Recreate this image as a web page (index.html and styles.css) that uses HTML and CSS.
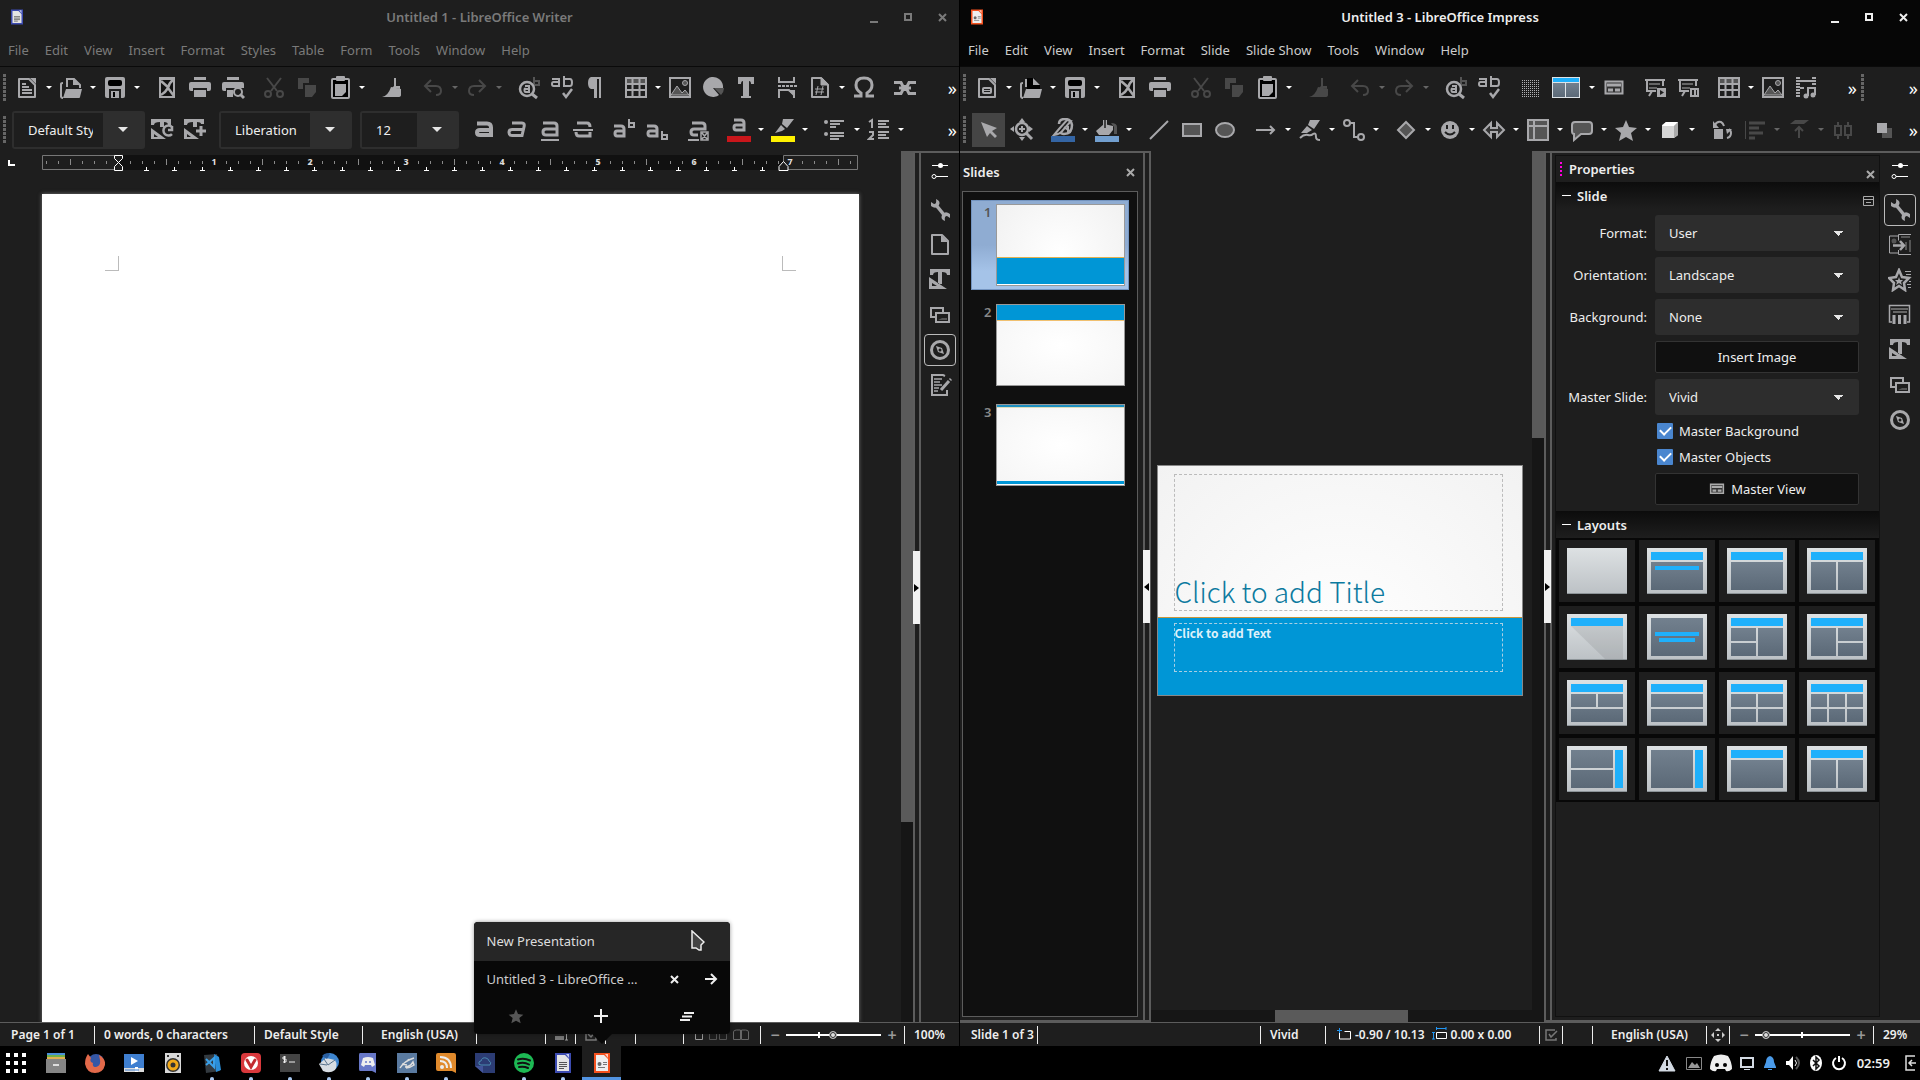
FILE: index.html
```html
<!DOCTYPE html>
<html lang="en">
<head>
<meta charset="utf-8">
<title>Desktop</title>
<link rel="stylesheet" href="styles.css">
</head>
<body>
<svg class="sprite" aria-hidden="true">
  <defs>
    <linearGradient id="g-sheet" x1="0" y1="0" x2="0" y2="1"><stop offset="0" stop-color="#dde1e3"/><stop offset="1" stop-color="#bcc1c5"/></linearGradient>
    <linearGradient id="g-slate" x1="0" y1="0" x2="0" y2="1"><stop offset="0" stop-color="#72808e"/><stop offset="1" stop-color="#5b6977"/></linearGradient>
    <pattern id="p-ticks" width="12" height="15" patternUnits="userSpaceOnUse"><path d="M4.500 6v3" stroke="#8a8a8a"/></pattern>
    <pattern id="p-half" width="96" height="15" patternUnits="userSpaceOnUse" x="-20"><path d="M48.500 4v6" stroke="#8a8a8a"/></pattern>
    <pattern id="p-dots" width="2" height="2" patternUnits="userSpaceOnUse"><path d="M0 0h1v1h-1z" fill="#b0b0b3"/></pattern>
  </defs>
  <symbol id="new" viewBox="0 0 24 24"><path d="M4 3h10l6 6v12H4z" fill="none" stroke="currentColor" stroke-width="2" stroke-linejoin="round"/><path d="M15 2h6v6z" fill="currentColor"/><path d="M7 8h4M7 11h7M7 14h10M7 17h10" stroke="currentColor" stroke-width="2"/></symbol>
  <symbol id="newshow" viewBox="0 0 24 24"><path d="M4 3h10l6 6v12H4z" fill="none" stroke="currentColor" stroke-width="2" stroke-linejoin="round"/><path d="M15 2h6v6z" fill="currentColor"/><rect x="7" y="11" width="10" height="7" rx="2" fill="currentColor"/><path d="M9 13.500h6M9 15.500h6" stroke="#1e1e1e"/></symbol>
  <symbol id="open" viewBox="0 0 24 24"><path d="M8 11V3h7l6 6v3" fill="none" stroke="currentColor" stroke-width="2"/><path d="M14 2l7 7h-7z" fill="currentColor"/><path d="M2 21V8q0-1 2-1M2 20q0 2 2 2" fill="none" stroke="currentColor" stroke-width="2"/><path d="M7 13h16l-2 8q0 1-1 1H4z" fill="currentColor"/></symbol>
  <symbol id="opend" viewBox="0 0 24 24"><path d="M8 2h7l6 7v4H8z" fill="#000"/><path d="M14 2l7 7h-7z" fill="currentColor"/><path d="M2 21V8q0-1 2-1M7 11V3M2 20q0 2 2 2" fill="none" stroke="currentColor" stroke-width="2"/><path d="M7 13h16l-2 8q0 1-1 1H4z" fill="currentColor"/></symbol>
  <symbol id="save" viewBox="0 0 24 24"><rect x="2" y="1" width="20" height="21" rx="2" fill="currentColor"/><rect x="5" y="4" width="14" height="6" rx="2" fill="#000"/><path d="M6 13h12v9H6z" fill="#1e1e1e"/><path d="M8 15h8v7H8z" fill="currentColor"/><path d="M10 16h2v5h-2z" fill="#000"/></symbol>
  <symbol id="pdf" viewBox="0 0 24 24"><path d="M4 1h16v21H4z" fill="currentColor"/><path d="M6 4h12v16H6z" fill="#111"/><path d="M6 5l8 7M18 4q-4 3-5 8-3 5-7 7M13 12l6 8" fill="none" stroke="currentColor" stroke-width="2.500"/></symbol>
  <symbol id="print" viewBox="0 0 24 24"><path d="M6 1h12v3H6zM3 6h18q2 0 2 2v5q0 2-2 2h-2v-3H5v3H3q-2 0-2-2V8q0-2 2-2zM6 14h12v7H6z" fill="currentColor"/></symbol>
  <symbol id="preview" viewBox="0 0 24 24"><path d="M6 1h12v3H6zM3 6h18q2 0 2 2v4H5v3H3q-2 0-2-2V8q0-2 2-2zM6 14h6v7H6z" fill="currentColor"/><circle cx="17" cy="16" r="4" fill="#1e1e1e" stroke="currentColor" stroke-width="2"/><path d="M19 18l4 4" stroke="currentColor" stroke-width="3"/></symbol>
  <symbol id="cut" viewBox="0 0 24 24"><path d="M5 2l10 13M19 2L9 15" stroke="currentColor" stroke-width="2"/><circle cx="6" cy="18" r="3" fill="none" stroke="currentColor" stroke-width="2"/><circle cx="18" cy="18" r="3" fill="none" stroke="currentColor" stroke-width="2"/></symbol>
  <symbol id="copy" viewBox="0 0 24 24"><path d="M3 2h11v5H8v6H3z" fill="currentColor"/><path d="M10 9h11v7l-4 5h-7z" fill="currentColor"/></symbol>
  <symbol id="paste" viewBox="0 0 24 24"><rect x="4" y="3" width="17" height="19" rx="1" fill="#000" stroke="currentColor" stroke-width="2"/><rect x="8" y="0" width="9" height="5" rx="1" fill="currentColor"/><path d="M7 8h11v8l-4 4H7z" fill="currentColor"/></symbol>
  <symbol id="brush" viewBox="0 0 24 24"><path d="M14 2h2v8h4v3l-8-1 2-2z" fill="currentColor"/><path d="M11 11l10 2v6q0 2-3 2H2q6-1 9-10z" fill="currentColor"/></symbol>
  <symbol id="undo" viewBox="0 0 24 24"><path d="M10 4L4 10l6 6M5 10h10q5 0 5 5 0 4-5 4" fill="none" stroke="currentColor" stroke-width="2"/></symbol>
  <symbol id="redo" viewBox="0 0 24 24"><path d="M14 4l6 6-6 6M19 10H9q-5 0-5 5 0 4 5 4" fill="none" stroke="currentColor" stroke-width="2"/></symbol>
  <symbol id="find" viewBox="0 0 24 24"><path d="M17 1v8h5V5h-5" fill="none" stroke="#555" stroke-width="2"/><circle cx="10" cy="13" r="7" fill="#1e1e1e" stroke="currentColor" stroke-width="2.500"/><path d="M8 10h4v6H8.500q-1 0-1-2t1-1H12" fill="none" stroke="currentColor" stroke-width="2"/><path d="M15 18l5 4" stroke="currentColor" stroke-width="3"/></symbol>
  <symbol id="spell" viewBox="0 0 24 24"><path d="M2 3h7v7H3.500Q2 10 2 8t1.500-2H9M14 0v10h6q2 0 2-3.500T20 3h-6" fill="none" stroke="currentColor" stroke-width="2"/><path d="M13 17l3 4 6-8" fill="none" stroke="currentColor" stroke-width="2.500"/></symbol>
  <symbol id="pil" viewBox="0 0 24 24"><path d="M6 1h12v21h-2V3h-2v19h-3V13H8Q5 12 5 7t3-6z" fill="currentColor"/></symbol>
  <symbol id="table" viewBox="0 0 24 24"><path d="M2 2h20v5H2z" fill="#555"/><path d="M2 2h20v19H2zM2 8h20M2 14h20M8.500 2v19M15.500 2v19" fill="none" stroke="currentColor" stroke-width="2"/></symbol>
  <symbol id="image" viewBox="0 0 24 24"><path d="M3 19l6-9 5 7 3-3 4 5z" fill="#555" stroke="currentColor"/><circle cx="17" cy="7" r="2.500" fill="#555" stroke="currentColor"/><path d="M2 2h20v19H2z" fill="none" stroke="currentColor" stroke-width="2"/></symbol>
  <symbol id="chart" viewBox="0 0 24 24"><path d="M13 12h10q0 4-3 7z" fill="#555"/><path d="M12 12h10A10 10 0 1 0 18 19z" fill="currentColor"/></symbol>
  <symbol id="tee" viewBox="0 0 24 24"><path d="M4 1h16v7h-3q0-3-2-3v15h2v2H7v-2h2V5Q7 5 7 8H4z" fill="currentColor"/></symbol>
  <symbol id="pbreak" viewBox="0 0 24 24"><path d="M4 1v5h15V1M4 22v-8h10l5 5v3" fill="none" stroke="currentColor" stroke-width="2"/><path d="M3 10h19" stroke="currentColor" stroke-width="2" stroke-dasharray="3 1"/><path d="M12 14h8v6z" fill="currentColor"/></symbol>
  <symbol id="field" viewBox="0 0 24 24"><path d="M4 2h9l7 7v12H4z" fill="none" stroke="currentColor" stroke-width="2" stroke-linejoin="round"/><path d="M13 2h1l6 6v1h-7zM10 10l-2 9M15 10l-2 9M7 13h9M7 16h9" fill="currentColor" stroke="currentColor"/></symbol>
  <symbol id="omega" viewBox="0 0 24 24"><path d="M2 20h7v-3Q4 14 4 9q0-7 8-7t8 7q0 5-5 8v3h7" fill="none" stroke="currentColor" stroke-width="3"/></symbol>
  <symbol id="link" viewBox="0 0 24 24"><path d="M1 6.500h7l2 4h4l2-4h7M1 17.500h7l2-4h4l2 4h7M6 12h12" fill="none" stroke="currentColor" stroke-width="3"/></symbol>
  <symbol id="tstyle" viewBox="0 0 24 24"><path d="M2 1h20v6h-3q0-3-5-3v12h-4V4Q5 4 5 7H2zM1 9l18 12H1zm3 6v3h5z" fill="currentColor" fill-rule="evenodd"/></symbol>
  <symbol id="tupd" viewBox="0 0 24 24"><path d="M1 1h20v6h-3q0-3-4-3v5h-4V4Q4 4 4 7H1zM1 10l15 11H1zm3 6v3h4z" fill="currentColor" fill-rule="evenodd"/><path d="M22 9a5 5 0 1 0 0 7M22 8v4h-4" fill="none" stroke="currentColor" stroke-width="2.500"/></symbol>
  <symbol id="tnew" viewBox="0 0 24 24"><path d="M1 1h20v5h-3q0-2-4-2v5h-4V4Q4 4 4 7H1zM1 10l15 11H1zm3 6v3h4z" fill="currentColor" fill-rule="evenodd"/><path d="M18 8v10M13 13h10" stroke="currentColor" stroke-width="3"/></symbol>
  <symbol id="bold" viewBox="0 0 24 24"><path d="M5 5.500h10q4 0 4 4v7.500H8q-3 0-3-2.500T8 12h10" fill="none" stroke="currentColor" stroke-width="4"/></symbol>
  <symbol id="ital" viewBox="0 0 24 24"><path d="M7 5h10q3 0 2 4l-2 8.500H7q-3 0-3-3t3-3h11" fill="none" stroke="currentColor" stroke-width="3"/></symbol>
  <symbol id="under" viewBox="0 0 24 24"><path d="M5 5h11q3 0 3 3v9H8q-3 0-3-3t3-3h11" fill="none" stroke="currentColor" stroke-width="3"/><path d="M3 22h18" stroke="currentColor" stroke-width="2"/></symbol>
  <symbol id="strike" viewBox="0 0 24 24"><path d="M6 5h10q3 0 3 4M19 14v4H8q-3 0-3-4" fill="none" stroke="currentColor" stroke-width="3"/><path d="M2 12h20" stroke="currentColor" stroke-width="2"/></symbol>
  <symbol id="sup" viewBox="0 0 24 24"><path d="M2 8h7q3 0 3 3v7H5q-2 0-2-2.500T5 13h7" fill="none" stroke="currentColor" stroke-width="3"/><path d="M17 1v8h5V5h-5" fill="none" stroke="currentColor" stroke-width="2"/></symbol>
  <symbol id="sub" viewBox="0 0 24 24"><path d="M2 8h7q3 0 3 3v7H5q-2 0-2-2.500T5 13h7" fill="none" stroke="currentColor" stroke-width="3"/><path d="M17 13v8h5v-4h-5" fill="none" stroke="currentColor" stroke-width="2"/></symbol>
  <symbol id="clear" viewBox="0 0 24 24"><path d="M6 5h10q3 0 3 3v3H8q-3 0-3 3t3 3h4" fill="none" stroke="currentColor" stroke-width="3"/><path d="M2 22h11" stroke="currentColor" stroke-width="2"/><path d="M15 14h7v8h-7zM16 15l5 6M21 15l-5 6" fill="#1e1e1e" stroke="currentColor" stroke-width="1.500"/></symbol>
  <symbol id="fcol" viewBox="0 0 24 24"><path d="M7 2h7q3 0 3 3v7H9q-2 0-2-2.500T9 7h8" fill="none" stroke="currentColor" stroke-width="3"/><path d="M0 18h24v6H0z" fill="#c9161b"/></symbol>
  <symbol id="hcol" viewBox="0 0 24 24"><path d="M12 1h11l-7 9-5-4zM10 7l4 4-3 2-7 2z" fill="currentColor"/><path d="M0 18h24v6H0z" fill="#fff200"/></symbol>
  <symbol id="bul" viewBox="0 0 24 24"><circle cx="3" cy="4" r="2" fill="currentColor"/><circle cx="3" cy="16" r="2" fill="currentColor"/><path d="M7 3h14M7 6h10M7 9h6M7 15h14M7 18h14M7 21h9" stroke="currentColor" stroke-width="2"/></symbol>
  <symbol id="num" viewBox="0 0 24 24"><path d="M2 4l3-2v8M2 14h4v3l-4 4h5" fill="none" stroke="currentColor" stroke-width="2"/><path d="M11 3h11M11 6h8M11 9h11M11 14h11M11 17h8M11 20h11" stroke="currentColor" stroke-width="2"/></symbol>
  <symbol id="grid" viewBox="0 0 24 24"><path d="M3 4h18v18H3z" fill="url(#p-dots)"/></symbol>
  <symbol id="layout" viewBox="0 0 28 21"><path d="M0 0h28v21H0z" fill="#dde3e7"/><path d="M1 1h26v4H1z" fill="#1fb0fb"/><path d="M1 6h12v14H1zM14 6h13v14H14z" fill="url(#g-slate)"/></symbol>
  <symbol id="master" viewBox="0 0 24 24"><path d="M3.500 5.500h17v12h-17z" fill="#333" stroke="currentColor" stroke-width="2"/><path d="M5 9h14M6 14h5M13 14h5" stroke="currentColor" stroke-width="3"/></symbol>
  <symbol id="play" viewBox="0 0 24 24"><path d="M2 4h20M4 5v10h9M20 5v5M9 15l-3 5" fill="none" stroke="currentColor" stroke-width="2"/><path d="M6 7h11v2H6zM6 11h8v2H6z" fill="#666"/><path d="M14 12h9v9h-9z" fill="currentColor"/><path d="M17 14l4 2.500-4 2.500z" fill="#1e1e1e"/></symbol>
  <symbol id="playc" viewBox="0 0 24 24"><path d="M2 4h20M4 5v10h9M20 5v5M9 15l-3 5" fill="none" stroke="currentColor" stroke-width="2"/><path d="M6 7h11v2H6zM6 11h8v2H6z" fill="#666"/><path d="M14 12h9v9h-9z" fill="currentColor"/><path d="M16 14h2v5h-2zM20 14h1v5h-1z" fill="#1e1e1e"/></symbol>
  <symbol id="video" viewBox="0 0 24 24"><path d="M4 1v20M20 1v9" stroke="currentColor" stroke-width="4" stroke-dasharray="2 1"/><path d="M6 5h12M6 12h4" stroke="currentColor" stroke-width="2"/><path d="M14 20v-8h7v7" fill="none" stroke="currentColor" stroke-width="2"/><circle cx="12" cy="20" r="2.500" fill="currentColor"/><circle cx="19" cy="19" r="2.500" fill="currentColor"/></symbol>
  <symbol id="select" viewBox="0 0 24 24"><path d="M4 4l16 6-5 3 5 5-2 2-5-5-3 4z" fill="currentColor"/></symbol>
  <symbol id="zoom" viewBox="0 0 24 24"><path d="M12 0l3 4H9zM12 23l3-4H9zM0 11l4-3v6zM23 11l-4-3v6z" fill="currentColor"/><circle cx="12" cy="11" r="6" fill="#1e1e1e" stroke="currentColor" stroke-width="2.500"/><path d="M12 8v6M9 11h6" stroke="currentColor" stroke-width="2"/><path d="M16 15l6 6" stroke="currentColor" stroke-width="3"/></symbol>
  <symbol id="lcol" viewBox="0 0 24 24"><path d="M8 6q0-5 6-5t7 6q0 9-8 9-3 0-4-2" fill="none" stroke="currentColor" stroke-width="2.500"/><path d="M3 17q7-1 9-5l8-9-4-1-8 9zM13 9l7 5M17 8v7" fill="none" stroke="currentColor" stroke-width="2"/><path d="M0 18h24v6H0z" fill="#3465a4"/></symbol>
  <symbol id="bcol" viewBox="0 0 24 24"><path d="M16 5q6 0 6 4v7h-3V9z" fill="#555"/><path d="M9 6l9 2v4l-4 5H4l-3-4z" fill="currentColor"/><path d="M10 2v9" stroke="currentColor" stroke-width="4"/><path d="M10 2v8" stroke="#1e1e1e" stroke-width="1.500"/><path d="M0 18h24v6H0z" fill="#729fcf"/></symbol>
  <symbol id="line" viewBox="0 0 24 24"><path d="M3 21L21 3" stroke="currentColor" stroke-width="2"/></symbol>
  <symbol id="rect" viewBox="0 0 24 24"><path d="M3 6h18v12H3z" fill="#555" stroke="currentColor" stroke-width="2"/></symbol>
  <symbol id="ell" viewBox="0 0 24 24"><ellipse cx="12" cy="12" rx="9" ry="7" fill="#555" stroke="currentColor" stroke-width="2"/></symbol>
  <symbol id="larr" viewBox="0 0 24 24"><path d="M2 12h18M16 8l4 4-4 4" fill="none" stroke="currentColor" stroke-width="2"/></symbol>
  <symbol id="curve" viewBox="0 0 24 24"><path d="M12 2h10l-6 9-6-4zM9 8l5 4-5 3-6 0z" fill="currentColor"/><path d="M2 20q4-4 8-3 3 1 5-1 3-2 3 3 0 3 4 3" fill="none" stroke="currentColor" stroke-width="2"/></symbol>
  <symbol id="conn" viewBox="0 0 24 24"><circle cx="5" cy="5" r="3" fill="none" stroke="currentColor" stroke-width="2"/><circle cx="19" cy="19" r="3" fill="none" stroke="currentColor" stroke-width="2"/><path d="M8 5h4v14h4" fill="none" stroke="currentColor" stroke-width="2"/></symbol>
  <symbol id="diam" viewBox="0 0 24 24"><path d="M12 4l8 8-8 8-8-8z" fill="#555" stroke="currentColor" stroke-width="2"/></symbol>
  <symbol id="smile" viewBox="0 0 24 24"><circle cx="12" cy="12" r="9" fill="currentColor"/><path d="M9 7v4M15 7v4M7 14q5 5 10 0" fill="none" stroke="#1e1e1e" stroke-width="2"/></symbol>
  <symbol id="dbl" viewBox="0 0 24 24"><path d="M9 5v5h6V5l7 7-7 7v-5H9v5l-7-7z" fill="#333" stroke="currentColor" stroke-width="2"/></symbol>
  <symbol id="flow" viewBox="0 0 24 24"><path d="M2 2h20v20H2z" fill="#555" stroke="currentColor" stroke-width="2"/><path d="M2 8h20M8 2v20" stroke="currentColor" stroke-width="2"/></symbol>
  <symbol id="call" viewBox="0 0 24 24"><path d="M5 4h14q3 0 3 3v6q0 3-3 3h-8l-7 6v-6Q2 16 2 13V7q0-3 3-3z" fill="#555" stroke="currentColor" stroke-width="2"/></symbol>
  <symbol id="star" viewBox="0 0 24 24"><path d="M12 2l3 7 8 1-6 5 2 8-7-4-7 4 2-8-6-5 8-1z" fill="currentColor"/></symbol>
  <symbol id="cube" viewBox="0 0 24 24"><path d="M4 7l4-3h12v13l-4 3H4z" fill="#d5d5d5"/><path d="M4 8l4-4h12l-4 4z" fill="#fff"/><path d="M16 8l4-4v13l-4 3z" fill="#aaa"/></symbol>
  <symbol id="rot" viewBox="0 0 24 24"><path d="M4 11h9v10H4z" fill="currentColor"/><path d="M5 7q2-4 6-3 2 1 3 4M17 20q4-1 4-5 0-2-2-4" fill="none" stroke="currentColor" stroke-width="2"/><path d="M3 3v7h6zM16 11h6l-5 5z" fill="currentColor"/></symbol>
  <symbol id="align" viewBox="0 0 24 24"><path d="M2.500 3v18" stroke="currentColor"/><path d="M6 5h16M6 10h10M6 15h14M6 20h6" stroke="currentColor" stroke-width="3"/></symbol>
  <symbol id="arr" viewBox="0 0 24 24"><path d="M8 2h14l-5 4H3z" fill="currentColor"/><path d="M12 20V9M8 13l4-4 4 4" fill="none" stroke="currentColor" stroke-width="2"/></symbol>
  <symbol id="dist" viewBox="0 0 24 24"><path d="M4 8h6v9H4zM14 8h6v9h-6zM7 4v4M7 17v4M17 4v4M17 17v4" fill="none" stroke="currentColor" stroke-width="2"/></symbol>
  <symbol id="shadow" viewBox="0 0 24 24"><path d="M10 10h10v10H10z" fill="#555"/><path d="M5 5h10v10H5z" fill="currentColor"/></symbol>
  <symbol id="sliders" viewBox="0 0 24 24"><path d="M4 6.500h16M8 17.500h12" stroke="#fff"/><circle cx="12.500" cy="6.500" r="2.500" fill="#fff"/><circle cx="6" cy="17.500" r="2" fill="none" stroke="#fff"/></symbol>
  <symbol id="wrench" viewBox="0 0 24 24"><path d="M8 7l9 11" stroke="currentColor" stroke-width="3.500"/><path d="M8 1q5 2 3 6-3 5-8 1V4l3 2q3 0 2-5zM17 23q-5-2-3-6 3-5 8-1v4l-3-2q-3 0-2 5z" fill="currentColor"/></symbol>
  <symbol id="page" viewBox="0 0 24 24"><path d="M4 2h10l6 6v13H4z" fill="none" stroke="currentColor" stroke-width="2" stroke-linejoin="round"/><path d="M13 2l7 7h-7z" fill="currentColor"/></symbol>
  <symbol id="gallery" viewBox="0 0 24 24"><path d="M2 5h13v4M7 14H3V5" fill="none" stroke="currentColor" stroke-width="2"/><path d="M8 10h13v9H8z" fill="none" stroke="currentColor" stroke-width="2"/><path d="M10 17l4-2h5v2z" fill="#555"/></symbol>
  <symbol id="navi" viewBox="0 0 24 24"><circle cx="12" cy="12" r="8.500" fill="none" stroke="currentColor" stroke-width="3"/><path d="M8 8l6 2 2 6-6-2z" fill="currentColor"/><circle cx="12" cy="12" r="1.500" fill="#1e1e1e"/></symbol>
  <symbol id="changes" viewBox="0 0 24 24"><path d="M17 3l-2-1H4v20h15v-5" fill="none" stroke="currentColor" stroke-width="2"/><path d="M6 6h8M6 9h6M6 12h8M6 15h5M6 18h4" stroke="currentColor" stroke-width="1.500"/><path d="M13 17l8-9M22 7l1-1" stroke="currentColor" stroke-width="3"/></symbol>
  <symbol id="trans" viewBox="0 0 24 24"><path d="M10 3H1.500v17H11M23 1.500H10.500v6M10.500 17v4.500H23" fill="none" stroke="currentColor"/><path d="M13 4h9M18 9v8M22 7v12" stroke="#555" stroke-width="2"/><path d="M5 12.500h11M12 8l4 4.500-4 4.500" fill="none" stroke="currentColor" stroke-width="2.500"/><circle cx="6" cy="8" r="2.500" fill="#555"/></symbol>
  <symbol id="anim" viewBox="0 0 24 24"><path d="M11 2l3 7 7 1-5 5 1 7-6-4-6 4 1-7-5-5 7-1z" fill="none" stroke="currentColor" stroke-width="2.500"/><path d="M11 9l1 3h3l-2 2 1 3-3-2-3 2 1-3-2-2h3z" fill="currentColor"/><path d="M17 3.500h6M18 6.500h5M21 13.500h2M19 16.500h4M20 19.500h3" stroke="currentColor"/></symbol>
  <symbol id="mslides" viewBox="0 0 24 24"><path d="M4 19H1.500V2.500h20V19H19" fill="none" stroke="currentColor" stroke-width="1.500"/><path d="M3 6h17M5 9h14" stroke="#666" stroke-width="2"/><path d="M6 12v9M11.500 12v9M17 12v9" stroke="currentColor" stroke-width="3"/></symbol>
  <symbol id="wmin" viewBox="0 0 16 16"><path d="M4 12h8v2H4z" fill="currentColor"/></symbol>
  <symbol id="wmax" viewBox="0 0 16 16"><path d="M5 5h6v6H5z" fill="none" stroke="currentColor" stroke-width="2"/></symbol>
  <symbol id="wx" viewBox="0 0 16 16"><path d="M5 5l7 7M12 5l-7 7" stroke="currentColor" stroke-width="2"/></symbol>
  <symbol id="writer" viewBox="0 0 16 20"><path d="M0 0h16v20H0z" fill="#3c4bb0"/><path d="M2 2h8l4 4v12H2z" fill="#e4e4e4"/><path d="M11 1h3v4z" fill="#c5cae9"/><path d="M4 9.500h8M4 11.500h8M4 13.500h8M4 15.500h5" stroke="#555"/></symbol>
  <symbol id="impress" viewBox="0 0 16 20"><path d="M0 0h16v20H0z" fill="#f4511e"/><path d="M2 2h8l4 4v12H2z" fill="#eee"/><path d="M11 1h3v4z" fill="#ffccbc"/><path d="M9 9.500h4M9 11.500h4M4 14.500h7" stroke="#777"/><circle cx="5.500" cy="11" r="2" fill="#666"/></symbol>
  <symbol id="sheet" viewBox="0 0 60 46"><path d="M0 0h60v46H0z" fill="url(#g-sheet)"/><path d="M0 45h60v1H0z" fill="#8d9498"/></symbol>
</svg>

<main class="workspace">
  <section class="window writer" aria-label="Writer">
    <header class="titlebar">
      <svg class="app"><use href="#writer"/></svg><h1>Untitled 1 - LibreOffice Writer</h1>
      <div class="controls"><button aria-label="Minimize"><svg><use href="#wmin"/></svg></button><button aria-label="Maximize"><svg><use href="#wmax"/></svg></button><button aria-label="Close"><svg><use href="#wx"/></svg></button></div>
    </header>
    <nav class="menubar"><button>File</button><button>Edit</button><button>View</button><button>Insert</button><button>Format</button><button>Styles</button><button>Table</button><button>Form</button><button>Tools</button><button>Window</button><button>Help</button></nav>
    <div class="toolbar">
      <i class="grip"></i>
      <button class="tb" aria-label="New"><svg><use href="#new"/></svg></button><button class="dd" aria-label="More"></button>
      <button class="tb" aria-label="Open"><svg><use href="#open"/></svg></button><button class="dd" aria-label="More"></button>
      <button class="tb" aria-label="Save"><svg><use href="#save"/></svg></button><button class="dd" aria-label="More"></button><i class="sep"></i>
      <button class="tb" aria-label="Export as PDF"><svg><use href="#pdf"/></svg></button>
      <button class="tb" aria-label="Print"><svg><use href="#print"/></svg></button>
      <button class="tb" aria-label="Print preview"><svg><use href="#preview"/></svg></button><i class="sep"></i>
      <button class="tb" disabled aria-label="Cut"><svg><use href="#cut"/></svg></button>
      <button class="tb" disabled aria-label="Copy"><svg><use href="#copy"/></svg></button>
      <button class="tb" aria-label="Paste"><svg><use href="#paste"/></svg></button><button class="dd" aria-label="More"></button><i class="sep"></i>
      <button class="tb" aria-label="Clone formatting"><svg><use href="#brush"/></svg></button><i class="sep"></i>
      <button class="tb" disabled aria-label="Undo"><svg><use href="#undo"/></svg></button><button class="dd" disabled aria-label="More"></button>
      <button class="tb" disabled aria-label="Redo"><svg><use href="#redo"/></svg></button><button class="dd" disabled aria-label="More"></button><i class="sep"></i>
      <button class="tb" aria-label="Find"><svg><use href="#find"/></svg></button>
      <button class="tb" aria-label="Spelling"><svg><use href="#spell"/></svg></button>
      <button class="tb" aria-label="Formatting marks"><svg><use href="#pil"/></svg></button><i class="sep"></i>
      <button class="tb" aria-label="Table"><svg><use href="#table"/></svg></button><button class="dd" aria-label="More"></button>
      <button class="tb" aria-label="Image"><svg><use href="#image"/></svg></button>
      <button class="tb" aria-label="Chart"><svg><use href="#chart"/></svg></button>
      <button class="tb" aria-label="Text box"><svg><use href="#tee"/></svg></button><i class="sep"></i>
      <button class="tb" aria-label="Page break"><svg><use href="#pbreak"/></svg></button>
      <button class="tb" aria-label="Field"><svg><use href="#field"/></svg></button><button class="dd" aria-label="More"></button>
      <button class="tb" aria-label="Symbol"><svg><use href="#omega"/></svg></button><i class="sep"></i>
      <button class="tb" aria-label="Hyperlink"><svg><use href="#link"/></svg></button>
      <button class="more">»</button>
    </div>
    <div class="toolbar">
      <i class="grip"></i>
      <span class="combo"><input type="text" value="Default Style" aria-label="Paragraph style"><button aria-label="Open list"></button></span>
      <button class="tb" aria-label="Update style"><svg><use href="#tupd"/></svg></button>
      <button class="tb" aria-label="New style"><svg><use href="#tnew"/></svg></button><i class="sep"></i>
      <span class="combo"><input type="text" value="Liberation Serif" aria-label="Font"><button aria-label="Open list"></button></span><i class="sep"></i>
      <span class="combo size"><input type="text" value="12" aria-label="Font size"><button aria-label="Open list"></button></span><i class="sep"></i>
      <button class="tb" aria-label="Bold"><svg><use href="#bold"/></svg></button>
      <button class="tb" aria-label="Italic"><svg><use href="#ital"/></svg></button>
      <button class="tb" aria-label="Underline"><svg><use href="#under"/></svg></button>
      <button class="tb" aria-label="Strikethrough"><svg><use href="#strike"/></svg></button><i class="sep"></i>
      <button class="tb" aria-label="Superscript"><svg><use href="#sup"/></svg></button>
      <button class="tb" aria-label="Subscript"><svg><use href="#sub"/></svg></button><i class="sep"></i>
      <button class="tb" aria-label="Clear formatting"><svg><use href="#clear"/></svg></button><i class="sep"></i>
      <button class="tb" aria-label="Font colour"><svg><use href="#fcol"/></svg></button><button class="dd" aria-label="More"></button>
      <button class="tb" aria-label="Highlighting"><svg><use href="#hcol"/></svg></button><button class="dd" aria-label="More"></button><i class="sep"></i>
      <button class="tb" aria-label="Bullets"><svg><use href="#bul"/></svg></button><button class="dd" aria-label="More"></button>
      <button class="tb" aria-label="Numbering"><svg><use href="#num"/></svg></button><button class="dd" aria-label="More"></button>
      <button class="more">»</button>
    </div>
    <div class="body">
      <div class="document">
        <div class="rulerbar">
          <svg class="tab" viewBox="0 0 7 6"><path d="M1 0v5h6" fill="none" stroke="#fff" stroke-width="2"/></svg>
          <svg class="ruler" viewBox="0 0 817 18">
            <path d="M76 0h666v15H76z" fill="#111"/>
            <path d="M.500.500h76v14H.500zM741.500.500h74v14h-74z" fill="none" stroke="#777"/>
            <path d="M4 0h810v15H4z" fill="url(#p-ticks)"/><path d="M4 0h810v15H4z" fill="url(#p-half)"/>
            <path d="M104.500 12v3" stroke="#fff"/>
            <path d="M104 13.500h630" stroke="#fff" stroke-width="3" stroke-dasharray="1 27"/>
            <path d="M102 15.500h637" stroke="#fff" stroke-dasharray="5 23"/>
            <path d="M72.500.500h8v3l-8 8v4h8v-4l-8-8zM737 15.500v-4l4.500-5 4.500 5v4z" fill="#1e1e1e" stroke="#fff"/>
            <g class="nums"><text x="172" y="10">1</text><text x="268" y="10">2</text><text x="364" y="10">3</text><text x="460" y="10">4</text><text x="556" y="10">5</text><text x="652" y="10">6</text><text x="748" y="10">7</text></g>
          </svg>
        </div>
        <article class="paper"><i class="crop left"></i><i class="crop right"></i></article>
      </div>
      <div class="vscroll"><i class="w"></i></div>
      <div class="splitter"><button aria-label="Hide sidebar"><svg viewBox="0 0 5 8"><path d="M0 0l5 4-5 4z"/></svg></button></div>
      <nav class="tabs">
        <button aria-label="Settings"><svg><use href="#sliders"/></svg></button>
        <button aria-label="Properties"><svg><use href="#wrench"/></svg></button>
        <button aria-label="Page"><svg><use href="#page"/></svg></button>
        <button aria-label="Styles"><svg><use href="#tstyle"/></svg></button>
        <button aria-label="Gallery"><svg><use href="#gallery"/></svg></button>
        <button class="on" aria-label="Navigator"><svg><use href="#navi"/></svg></button>
        <button aria-label="Changes"><svg><use href="#changes"/></svg></button>
      </nav>
    </div>
    <footer class="status">
      <span class="c95">Page 1 of 1</span><span class="grow">0 words, 0 characters</span><span class="c108">Default Style</span><span class="c114 mid">English (USA)</span><span class="c69"></span>
      <span class="c30 mid"><svg class="st" viewBox="0 0 16 16"><path d="M2 9h9v4H2z" fill="#777"/><path d="M12 3h3M13.500 3v10M12 13h3" stroke="#999"/></svg></span>
      <span class="c30 mid"><svg class="st" viewBox="0 0 16 16"><path d="M11 3H3v10h10V9M5 7l3 3 6-7" fill="none" stroke="#777" stroke-width="1.500"/></svg></span>
      <span class="c30"></span><span class="c48"></span>
      <span class="c77 mid views"><svg viewBox="0 0 8 12"><path d="M.500.500h7v10h-7z" fill="none" stroke="#999"/></svg><svg viewBox="0 0 18 12"><path d="M.500.500h7v10h-7zM10.500.500h7v10h-7z" fill="none" stroke="#555"/></svg><svg viewBox="0 0 16 12"><path d="M.500 10.500V3q0-2 3-2h4v9.500zM8.500 1h4q3 0 3 2v7.500h-7z" fill="none" stroke="#666"/></svg></span>
      <span class="zoom"><button>−</button><input type="range" class="zw" min="0" max="100" value="49" aria-label="Zoom"><button>+</button></span><span class="c55 last">100%</span>
    </footer>
  </section>

  <section class="window impress" aria-label="Impress">
    <header class="titlebar">
      <svg class="app"><use href="#impress"/></svg><h1>Untitled 3 - LibreOffice Impress</h1>
      <div class="controls"><button aria-label="Minimize"><svg><use href="#wmin"/></svg></button><button aria-label="Maximize"><svg><use href="#wmax"/></svg></button><button aria-label="Close"><svg><use href="#wx"/></svg></button></div>
    </header>
    <nav class="menubar"><button>File</button><button>Edit</button><button>View</button><button>Insert</button><button>Format</button><button>Slide</button><button>Slide Show</button><button>Tools</button><button>Window</button><button>Help</button></nav>
    <div class="toolbar">
      <i class="grip"></i>
      <button class="tb" aria-label="New"><svg><use href="#newshow"/></svg></button><button class="dd" aria-label="More"></button>
      <button class="tb" aria-label="Open"><svg><use href="#opend"/></svg></button><button class="dd" aria-label="More"></button>
      <button class="tb" aria-label="Save"><svg><use href="#save"/></svg></button><button class="dd" aria-label="More"></button><i class="sep"></i>
      <button class="tb" aria-label="Export as PDF"><svg><use href="#pdf"/></svg></button>
      <button class="tb" aria-label="Print"><svg><use href="#print"/></svg></button><i class="sep"></i>
      <button class="tb" disabled aria-label="Cut"><svg><use href="#cut"/></svg></button>
      <button class="tb" disabled aria-label="Copy"><svg><use href="#copy"/></svg></button>
      <button class="tb" aria-label="Paste"><svg><use href="#paste"/></svg></button><button class="dd" aria-label="More"></button><i class="sep"></i>
      <button class="tb" disabled aria-label="Clone formatting"><svg><use href="#brush"/></svg></button><i class="sep"></i>
      <button class="tb" disabled aria-label="Undo"><svg><use href="#undo"/></svg></button><button class="dd" disabled aria-label="More"></button>
      <button class="tb" disabled aria-label="Redo"><svg><use href="#redo"/></svg></button><button class="dd" disabled aria-label="More"></button><i class="sep"></i>
      <button class="tb" aria-label="Find"><svg><use href="#find"/></svg></button>
      <button class="tb" aria-label="Spelling"><svg><use href="#spell"/></svg></button><i class="sep"></i>
      <button class="tb" aria-label="Grid"><svg><use href="#grid"/></svg></button>
      <button class="tb wide" aria-label="Layout"><svg><use href="#layout"/></svg></button><button class="dd" aria-label="More"></button>
      <button class="tb" aria-label="Master slide"><svg><use href="#master"/></svg></button><i class="sep"></i>
      <button class="tb" aria-label="Start from first"><svg><use href="#play"/></svg></button>
      <button class="tb" aria-label="Start from current"><svg><use href="#playc"/></svg></button><i class="sep"></i>
      <button class="tb" aria-label="Table"><svg><use href="#table"/></svg></button><button class="dd" aria-label="More"></button>
      <button class="tb" aria-label="Image"><svg><use href="#image"/></svg></button>
      <button class="tb" aria-label="Audio or video"><svg><use href="#video"/></svg></button>
      <button class="more">»</button><i class="grip second"></i><button class="more end">»</button>
    </div>
    <div class="toolbar">
      <i class="grip"></i>
      <button class="tb on" aria-label="Select"><svg><use href="#select"/></svg></button>
      <button class="tb" aria-label="Zoom and pan"><svg><use href="#zoom"/></svg></button><i class="sep"></i>
      <button class="tb" aria-label="Line colour"><svg><use href="#lcol"/></svg></button><button class="dd" aria-label="More"></button>
      <button class="tb" aria-label="Fill colour"><svg><use href="#bcol"/></svg></button><button class="dd" aria-label="More"></button><i class="sep"></i>
      <button class="tb" aria-label="Line"><svg><use href="#line"/></svg></button>
      <button class="tb" aria-label="Rectangle"><svg><use href="#rect"/></svg></button>
      <button class="tb" aria-label="Ellipse"><svg><use href="#ell"/></svg></button><i class="sep"></i>
      <button class="tb" aria-label="Lines and arrows"><svg><use href="#larr"/></svg></button><button class="dd" aria-label="More"></button>
      <button class="tb" aria-label="Curves"><svg><use href="#curve"/></svg></button><button class="dd" aria-label="More"></button>
      <button class="tb" aria-label="Connectors"><svg><use href="#conn"/></svg></button><button class="dd" aria-label="More"></button><i class="sep"></i>
      <button class="tb" aria-label="Basic shapes"><svg><use href="#diam"/></svg></button><button class="dd" aria-label="More"></button>
      <button class="tb" aria-label="Symbols"><svg><use href="#smile"/></svg></button><button class="dd" aria-label="More"></button>
      <button class="tb" aria-label="Block arrows"><svg><use href="#dbl"/></svg></button><button class="dd" aria-label="More"></button>
      <button class="tb" aria-label="Flowchart"><svg><use href="#flow"/></svg></button><button class="dd" aria-label="More"></button>
      <button class="tb" aria-label="Callouts"><svg><use href="#call"/></svg></button><button class="dd" aria-label="More"></button>
      <button class="tb" aria-label="Stars"><svg><use href="#star"/></svg></button><button class="dd" aria-label="More"></button>
      <button class="tb" aria-label="3D objects"><svg><use href="#cube"/></svg></button><button class="dd" aria-label="More"></button><i class="sep"></i>
      <button class="tb" aria-label="Rotate"><svg><use href="#rot"/></svg></button>
      <button class="tb" disabled aria-label="Align"><svg><use href="#align"/></svg></button><button class="dd" disabled aria-label="More"></button>
      <button class="tb" disabled aria-label="Arrange"><svg><use href="#arr"/></svg></button><button class="dd" disabled aria-label="More"></button>
      <button class="tb" disabled aria-label="Distribute"><svg><use href="#dist"/></svg></button><i class="sep"></i>
      <button class="tb" aria-label="Shadow"><svg><use href="#shadow"/></svg></button>
      <button class="more">»</button>
    </div>
    <div class="body">
      <aside class="slides">
        <header><h2>Slides</h2><button aria-label="Close"><svg><use href="#wx"/></svg></button></header>
        <ol>
          <li class="on"><span>1</span><i class="thumb first"></i></li>
          <li><span>2</span><i class="thumb second"></i></li>
          <li><span>3</span><i class="thumb third"></i></li>
        </ol>
      </aside>
      <div class="splitter lined"><button aria-label="Hide slides"><svg viewBox="0 0 5 8"><path d="M5 0L0 4l5 4z"/></svg></button></div>
      <div class="stage">
        <div class="canvas"><div class="slide"><div class="title">Click to add Title</div><div class="lower"><div class="text">Click to add Text</div></div></div></div>
        <div class="hscroll"><i></i></div>
      </div>
      <div class="vscroll"><i class="i"></i></div>
      <div class="splitter lined"><button aria-label="Hide sidebar"><svg viewBox="0 0 5 8"><path d="M0 0l5 4-5 4z"/></svg></button></div>
      <div class="sidebar">
        <div class="deck">
          <header class="deckhead"><i class="pink"></i><h2>Properties</h2><button aria-label="Close"><svg><use href="#wx"/></svg></button></header>
          <h3>Slide<button class="opts" aria-label="More options"><svg viewBox="0 0 12 11"><path d="M.500.500h10v9h-10zM0 3.500h11M3 6.500h5" fill="none" stroke="#aaa"/></svg></button></h3>
          <div class="form">
            <label for="format">Format:</label><select id="format"><option>User</option></select>
            <label for="orient">Orientation:</label><select id="orient"><option>Landscape</option></select>
            <label for="bg">Background:</label><select id="bg"><option>None</option></select>
            <button class="btn">Insert Image</button>
            <label for="ms">Master Slide:</label><select id="ms"><option>Vivid</option></select>
            <div class="checks"><label><input type="checkbox" checked>Master Background</label><label><input type="checkbox" checked>Master Objects</label></div>
            <button class="btn"><svg><use href="#master"/></svg>Master View</button>
          </div>
          <h3>Layouts</h3>
          <div class="layouts">
            <button aria-label="Blank"><svg viewBox="0 0 60 46"><use href="#sheet"/></svg></button>
            <button aria-label="Title slide"><svg viewBox="0 0 60 46"><use href="#sheet"/><path class="b" d="M4 4h52v8H4z"/><path class="s" d="M4 14h52v28H4z"/><path class="b" d="M8 18h44v4H8z"/></svg></button>
            <button aria-label="Title, content"><svg viewBox="0 0 60 46"><use href="#sheet"/><path class="b" d="M4 4h52v8H4z"/><path class="s" d="M4 14h52v28H4z"/></svg></button>
            <button aria-label="Title and two content"><svg viewBox="0 0 60 46"><use href="#sheet"/><path class="b" d="M4 4h52v8H4z"/><path class="s" d="M4 14h25v28H4zM31 14h25v28H31z"/></svg></button>
            <button aria-label="Title only"><svg viewBox="0 0 60 46"><use href="#sheet"/><path d="M4 12h52v33H38z" fill="#000" opacity=".08"/><path class="b" d="M4 4h52v8H4z"/></svg></button>
            <button aria-label="Centered text"><svg viewBox="0 0 60 46"><use href="#sheet"/><path class="s" d="M4 4h52v38H4z"/><path class="b" d="M8 18h44v4H8zM12 24h36v4H12z"/></svg></button>
            <button aria-label="Two content and content"><svg viewBox="0 0 60 46"><use href="#sheet"/><path class="b" d="M4 4h52v8H4z"/><path class="s" d="M4 14h25v13H4zM4 29h25v13H4zM31 14h25v28H31z"/></svg></button>
            <button aria-label="Content and two content"><svg viewBox="0 0 60 46"><use href="#sheet"/><path class="b" d="M4 4h52v8H4z"/><path class="s" d="M4 14h25v28H4zM31 14h25v13H31zM31 29h25v13H31z"/></svg></button>
            <button aria-label="Two content over content"><svg viewBox="0 0 60 46"><use href="#sheet"/><path class="b" d="M4 4h52v8H4z"/><path class="s" d="M4 14h25v13H4zM31 14h25v13H31zM4 29h52v13H4z"/></svg></button>
            <button aria-label="Content over content"><svg viewBox="0 0 60 46"><use href="#sheet"/><path class="b" d="M4 4h52v8H4z"/><path class="s" d="M4 14h52v13H4zM4 29h52v13H4z"/></svg></button>
            <button aria-label="Four content"><svg viewBox="0 0 60 46"><use href="#sheet"/><path class="b" d="M4 4h52v8H4z"/><path class="s" d="M4 14h25v13H4zM31 14h25v13H31zM4 29h25v13H4zM31 29h25v13H31z"/></svg></button>
            <button aria-label="Six content"><svg viewBox="0 0 60 46"><use href="#sheet"/><path class="b" d="M4 4h52v8H4z"/><path class="s" d="M4 14h16v13H4zM22 14h16v13H22zM40 14h16v13H40zM4 29h16v13H4zM22 29h16v13H22zM40 29h16v13H40z"/></svg></button>
            <button aria-label="Vertical title, text, chart"><svg viewBox="0 0 60 46"><use href="#sheet"/><path class="b" d="M48 4h8v38h-8z"/><path class="s" d="M4 4h42v18H4zM4 24h42v18H4z"/></svg></button>
            <button aria-label="Vertical title, vertical text"><svg viewBox="0 0 60 46"><use href="#sheet"/><path class="b" d="M48 4h8v38h-8z"/><path class="s" d="M4 4h42v38H4z"/></svg></button>
            <button aria-label="Title, vertical text"><svg viewBox="0 0 60 46"><use href="#sheet"/><path class="b" d="M4 4h52v8H4z"/><path class="s" d="M4 14h52v28H4z"/></svg></button>
            <button aria-label="Title, two vertical text"><svg viewBox="0 0 60 46"><use href="#sheet"/><path class="b" d="M4 4h52v8H4z"/><path class="s" d="M4 14h25v28H4zM31 14h25v28H31z"/></svg></button>
          </div>
        </div>
        <nav class="tabs">
          <button aria-label="Settings"><svg><use href="#sliders"/></svg></button>
          <button class="on" aria-label="Properties"><svg><use href="#wrench"/></svg></button>
          <button aria-label="Slide transition"><svg><use href="#trans"/></svg></button>
          <button aria-label="Animation"><svg><use href="#anim"/></svg></button>
          <button aria-label="Master slides"><svg><use href="#mslides"/></svg></button>
          <button aria-label="Styles"><svg><use href="#tstyle"/></svg></button>
          <button aria-label="Gallery"><svg><use href="#gallery"/></svg></button>
          <button aria-label="Navigator"><svg><use href="#navi"/></svg></button>
        </nav>
      </div>
    </div>
    <footer class="status">
      <span class="c78">Slide 1 of 3</span><span class="grow"></span><span class="c65">Vivid</span>
      <span class="c214 pos"><svg class="st" viewBox="0 0 16 16"><path d="M4.500 5v7h11V4.500h-6" fill="none" stroke="#fff"/><path d="M4.500 1v5M2 3.500h5" stroke="#2196f3"/></svg><b>-0.90 / 10.13</b><svg class="st" viewBox="0 0 16 16"><path d="M5.500 5.500h10v6h-10z" fill="none" stroke="#fff"/><path d="M5 1.500h10M5.500 0v3M15 0v3M2.500 5v7M1 5.500h3M1 12h3" stroke="#2196f3"/></svg><b>0.00 x 0.00</b></span>
      <span class="c23 mid"><svg class="st" viewBox="0 0 16 16"><path d="M12 3H3v10h10v-2M6 7l2 3 6-6" fill="none" stroke="#777" stroke-width="1.500"/></svg></span><span class="c30"></span><span class="c114 mid">English (USA)</span>
      <span class="c23 mid"><svg class="st" viewBox="0 0 16 16"><path d="M8 1l3 3H5zM8 15l3-3H5zM1 8l3-3v6zM15 8l-3-3v6zM7 7h2v2H7z" fill="#ccc"/></svg></span>
      <span class="zoom"><button>−</button><input type="range" class="zi" min="0" max="100" value="8" aria-label="Zoom"><button>+</button></span><span class="c47 last">29%</span>
    </footer>
  </section>
</main>

<footer class="panel">
  <button class="menu" aria-label="Applications"><svg viewBox="0 0 20 20"><path d="M0 0h4v4H0zM8 0h4v4H8zM16 0h4v4h-4zM0 8h4v4H0zM8 8h4v4H8zM16 8h4v4h-4zM0 16h4v4H0zM8 16h4v4H8zM16 16h4v4h-4z" fill="#fff"/></svg></button>
  <div class="tasks">
    <button aria-label="Files"><svg viewBox="0 0 20 20"><path d="M1 0h18v7H1z" fill="#4a90d9"/><path d="M1 2h18v5H1z" fill="#6fb04a"/><path d="M1 4h18v3H1z" fill="#e0b050"/><path d="M0 6h20v14H0z" fill="#858585"/><path d="M7 11h6v2H7z" fill="#ddd"/></svg></button>
    <button aria-label="Firefox"><svg viewBox="0 0 20 20"><circle cx="11" cy="9" r="8" fill="#3457a6"/><path d="M3 1l3 4q-2 4 2 5-1 4 3 4 5-1 4-7l-1-5q7 4 6 10-2 8-10 8T0 11Q0 5 3 1z" fill="#e2694a"/></svg></button>
    <button aria-label="Videos"><svg viewBox="0 0 20 20"><path d="M0 1h20v14H0z" fill="#3f7fd0"/><path d="M0 15h20v4H0z" fill="#ddd"/><path d="M7 4l7 4-7 4zM11 14h3v5h-3z" fill="#fff"/><path d="M1 17h14" stroke="#3f7fd0"/></svg></button>
    <button aria-label="Music"><svg viewBox="0 0 20 20"><path d="M2 0h16v20H2z" fill="#d8d8d8"/><circle cx="10" cy="12" r="7" fill="#333"/><circle cx="10" cy="12" r="4" fill="#333" stroke="#f0a818" stroke-width="3"/><path d="M4 2h2v2H4zM14 2h2v2h-2z" fill="#333"/></svg></button>
    <button class="run" aria-label="Code"><svg viewBox="0 0 20 20"><path d="M2 2l13-1 3 17-14 2z" fill="#333a40"/><path d="M12 1l5 3 2 13-5 2z" fill="#2a8ed8"/><path d="M4 6l8 8V5l-8 7" fill="none" stroke="#3aa0e8" stroke-width="2"/></svg></button>
    <button class="run" aria-label="Vivaldi"><svg viewBox="0 0 20 20"><rect width="20" height="20" rx="4" fill="#d8383c"/><circle cx="10" cy="10" r="7" fill="#fff"/><path d="M6 7l4 7 4-7" fill="none" stroke="#c22c30" stroke-width="3" stroke-linecap="round"/></svg></button>
    <button class="run" aria-label="Terminal"><svg viewBox="0 0 20 20"><path d="M0 1h20v18H0z" fill="#444"/><path d="M6 4H3v2h3v3H3M4.500 3v7M9 9h6" fill="none" stroke="#eee"/></svg></button>
    <button class="run" aria-label="Mail"><svg viewBox="0 0 20 20"><circle cx="11" cy="9" r="9" fill="#3f86d0"/><path d="M0 11l7-6 9 2q3 5 0 10-5 4-12 1z" fill="#d8dde2"/><path d="M5 6l4 6 7-5M1 11l7 1" fill="none" stroke="#55708a"/><path d="M3 3q3-4 8-2L8 6z" fill="#2a5fa0"/></svg></button>
    <button class="run" aria-label="Discord"><svg viewBox="0 0 20 20"><path d="M2 0h16v20l-4-2H2Q1 18 1 16V2q0-2 1-2z" fill="#6878c8"/><path d="M5 5q5-2 10 0l2 7-3 2-1-2H7l-1 2-3-2z" fill="#eee"/><circle cx="8" cy="9" r="1" fill="#6878c8"/><circle cx="12" cy="9" r="1" fill="#6878c8"/></svg></button>
    <button class="run" aria-label="Airplane"><svg viewBox="0 0 20 20"><path d="M0 0h20v20H0z" fill="#5a7aa0"/><path d="M3 15q4-7 14-10M5 11l5 1M11 6l1 2M8 14q5 0 8-5l1 3q-4 3-8 3" fill="none" stroke="#ddd" stroke-width="1.500"/></svg></button>
    <button class="run" aria-label="Feeds"><svg viewBox="0 0 20 20"><path d="M0 2q0-2 2-2h16q2 0 2 2v18l-4-2H2q-2 0-2-2z" fill="#e08a2c"/><circle cx="6" cy="14" r="2" fill="#eee"/><path d="M4 8q7 0 7 7M4 4q11 0 11 11" fill="none" stroke="#eee" stroke-width="2"/></svg></button>
    <button aria-label="Cloud"><svg viewBox="0 0 20 20"><path d="M0 0h20v20H8L0 13z" fill="#2c3c74"/><path d="M0 13l8 7v-7z" fill="#42549a"/><path d="M6 12q-3 0-2-3 1-1 2-1 1-4 5-3 3 1 3 3 3 1 1 4z" fill="none" stroke="#4a8ab0"/></svg></button>
    <button class="run" aria-label="Spotify"><svg viewBox="0 0 20 20"><circle cx="10" cy="10" r="10" fill="#1db954"/><path d="M4 6.500q6-2 12 1M4 10.500q6-2 11 1M5 14q5-1 9 1" fill="none" stroke="#111" stroke-width="2" stroke-linecap="round"/></svg></button>
    <button class="run" aria-label="Writer"><svg viewBox="0 0 16 20"><use href="#writer"/></svg></button>
    <div class="slot">
      <button class="active" aria-label="Impress"><svg viewBox="0 0 16 20"><use href="#impress"/></svg></button>
      <div class="popup">
        <button class="head">New Presentation</button>
        <div class="row"><button class="name">Untitled 3 - LibreOffice …</button><button class="ic" aria-label="Close"><svg><use href="#wx"/></svg></button><button class="ic" aria-label="Go to"><svg viewBox="0 0 16 16"><path d="M2 8h11M8 3l5 5-5 5" fill="none" stroke="currentColor" stroke-width="2"/></svg></button></div>
        <div class="acts"><button class="dim" aria-label="Pin"><svg viewBox="0 0 24 24"><use href="#star"/></svg></button><button aria-label="New window"><svg viewBox="0 0 16 16"><path d="M8 1v14M1 8h14" stroke="currentColor" stroke-width="2"/></svg></button><button aria-label="Window controls"><svg viewBox="0 0 16 16"><path d="M5 5h10M3 8.500h10M1 12h10" stroke="currentColor" stroke-width="2"/></svg></button></div>
        <svg class="cursor" viewBox="0 0 14 22"><path d="M1 1v17h4l3 2h2v-5l3-3z" fill="#444" stroke="#eee" stroke-width="1.500"/></svg>
      </div>
    </div>
  </div>
  <div class="tray">
    <svg viewBox="0 0 20 20"><path d="M10 3l8 15H2z" fill="#d3dae3" stroke="#d3dae3" stroke-linejoin="round"/><path d="M9 7h2v6H9zM9 15h2v2H9z" fill="#111"/></svg>
    <svg viewBox="0 0 20 20"><path d="M2.500 4.500h15v12h-15z" fill="none" stroke="#888"/><path d="M4 15l4-6 3 3 2-2 3 5z" fill="#999"/></svg>
    <svg viewBox="0 0 22 18"><path d="M4 2q7-3 14 0 4 6 4 13-3 3-6 2l-1-2H7l-1 2Q3 18 0 15 0 8 4 2z" fill="#eee"/><circle cx="7" cy="11" r="2" fill="#000"/><circle cx="15" cy="11" r="2" fill="#000"/></svg>
    <svg viewBox="0 0 20 20"><path d="M4 5h12v9H4z" fill="none" stroke="#d3dae3" stroke-width="2"/><path d="M7 16h6v1H7z" fill="#d3dae3"/></svg>
    <svg viewBox="0 0 20 20"><path d="M10 3q4 1 4 6l2 5v1H4v-1l2-5q0-5 4-6zM8 16h4v1H8z" fill="#4a9ae8"/></svg>
    <svg viewBox="0 0 20 20"><path d="M3 8h3l4-5v14l-4-5H3z" fill="#fff"/><path d="M12 7q3 3 0 6" fill="none" stroke="#fff"/><path d="M13 4q6 6 0 12" fill="none" stroke="#555" stroke-width="2"/></svg>
    <svg viewBox="0 0 20 20"><ellipse cx="10" cy="10" rx="6" ry="8" fill="#fff"/><path d="M7 7l6 6-3 3V4l3 3-6 6" fill="none" stroke="#111" stroke-width="1.500"/></svg>
    <svg viewBox="0 0 20 20"><path d="M7 5a6 6 0 1 0 6 0M10 3v6" fill="none" stroke="#fff" stroke-width="2"/></svg>
    <time>02:59</time>
    <svg viewBox="0 0 20 20"><path d="M15 3H6v14h9M16 10h-7M12 7l-3 3 3 3" fill="none" stroke="#ddd" stroke-width="1.500"/></svg>
  </div>
</footer>
</body>
</html>
```
FILE: styles.css
```css
* { box-sizing: border-box; }
html, body { height: 100%; margin: 0; }
body {
  display: flex;
  flex-direction: column;
  min-height: 100vh;
  overflow: hidden;
  background: #000;
  color: #eee;
  font: 13px/20px "Noto Sans", sans-serif;
}
button, input, select { font: inherit; color: inherit; margin: 0; }
button { padding: 0; border: 0; background: none; }
h1, h2, h3, ol { margin: 0; padding: 0; font-size: 13px; font-weight: 600; list-style: none; }
svg { display: block; flex: none; }
i { display: block; flex: none; }
.sprite { position: absolute; width: 0; height: 0; }

.workspace { display: flex; flex: 1; min-height: 0; }
.window { display: flex; flex: none; flex-direction: column; width: 50%; min-width: 0; background: #1e1e1e; }
.writer { border-right: 1px solid #000; }

.titlebar { display: grid; grid-template-columns: 1fr auto 1fr; align-items: center; height: 34px; flex: none; }
.app { width: 12px; height: 16px; margin-left: 11px; }
.controls { display: flex; justify-content: flex-end; }
.controls button { display: grid; place-items: center; width: 34px; height: 34px; }
.controls svg { width: 16px; height: 16px; }
.writer .titlebar, .writer .menubar { color: #7a7a7a; }
.impress .titlebar, .impress .menubar { background: #060606; }
.menubar { display: flex; flex: none; height: 33px; border-bottom: 1px solid #0a0a0a; }
.menubar button { padding: 0 8px; }
.impress .menubar { color: #ccc; }

.toolbar { display: flex; flex: none; align-items: center; height: 42px; padding: 0 0 1px 3px; color: #a8a8ab; }
.grip { width: 3px; height: 27px; margin-right: 4px; background: repeating-linear-gradient(#666 0 3px, transparent 3px 4px); }
.toolbar + .toolbar .grip { margin-right: 6px; }
.grip.second { margin: 0 0 0 2px; }
.tb { display: grid; place-items: center; flex: none; width: 33px; height: 34px; }
.tb svg { width: 24px; height: 24px; }
.tb.wide { width: 40px; }
.tb.wide svg { width: 28px; height: 21px; }
.tb.on { background: #454545; }
.dd { display: grid; place-items: center; flex: none; width: 11px; height: 34px; }
.dd::before { content: ""; border: 3px solid transparent; border-top-color: #fff; border-bottom: 0; }
button:disabled { color: #484848; }
.dd:disabled::before { border-top-color: #666; }
.sep { width: 8px; }
.more { margin-left: auto; padding-right: 2px; color: #fff; font-size: 18px; }
.more.end { margin-left: 45px; margin-right: 0; }
.combo { display: flex; flex: none; width: 133px; height: 38px; border: 2px solid #2e2e2e; border-radius: 3px; }
.combo.size { width: 99px; }
.combo input { flex: 1; min-width: 0; width: 0; padding: 0 10px 0 14px; border: 0; outline: 0; background: #1e1e1e; color: #eee; }
.combo button { display: grid; place-items: center; width: 40px; background: #2e2e2e; }
.combo button::before { content: ""; border: 5px solid transparent; border-top-color: #e6e6e6; border-bottom: 0; }

.body { display: flex; flex: 1; min-height: 0; }
.document { display: flex; flex: 1; flex-direction: column; align-items: center; min-width: 0; min-height: 0; overflow: hidden; }
.rulerbar { position: relative; flex: none; width: 817px; height: 38px; padding-top: 4px; margin-bottom: 5px; }
.ruler { width: 817px; height: 18px; }
.tab { position: absolute; left: -34px; top: 9px; width: 7px; height: 6px; }
.nums { fill: #ddd; font-size: 9px; font-weight: 700; text-anchor: middle; }
.paper { position: relative; flex: 1; width: 817px; background: #fff; box-shadow: 0 0 4px #777; }
.crop { position: absolute; top: 62px; width: 14px; height: 15px; border-bottom: 1px solid #bbb; }
.crop.left { left: 63px; border-right: 1px solid #bbb; }
.crop.right { right: 63px; border-left: 1px solid #bbb; }
.vscroll { flex: none; width: 12px; background: #161616; }
.vscroll i { background: #5a5a5a; }
.vscroll .w { height: 77%; }
.vscroll .i { height: 33%; }
.splitter { display: flex; flex: none; align-items: center; width: 8px; border: 2px solid #5c5c5c; border-bottom: 0; }
.splitter.lined { border-bottom: 2px solid #5c5c5c; }
.splitter button { display: grid; place-items: center; flex: none; width: 7px; height: 73px; margin-left: -2px; background: #f2f2f2; color: #111; }
.splitter svg { width: 5px; height: 8px; }
.tabs { display: flex; flex: none; flex-direction: column; align-items: center; gap: 3px; width: 38px; padding-top: 2px; border-top: 2px solid #5c5c5c; color: #a8a8ab; }
.tabs button { display: grid; place-items: center; width: 32px; height: 32px; border: 1px solid transparent; border-radius: 4px; }
.tabs button:first-child { margin-bottom: 4px; }
.tabs .on { border-color: #bbb; }
.tabs svg { width: 24px; height: 24px; }

.slides { display: flex; flex: none; flex-direction: column; width: 183px; padding: 0 5px 3px 2px; border: solid #5c5c5c; border-width: 2px 0; }
.slides header { display: flex; align-items: center; justify-content: space-between; height: 38px; padding-left: 1px; }
.slides header svg, .deckhead svg { width: 16px; height: 16px; color: #aaa; }
.slides ol { flex: 1; padding: 8px; border: 1px solid #5c5c5c; background: #101010; }
.slides li { display: flex; justify-content: space-between; height: 90px; margin-bottom: 10px; padding: 4px 4px 4px 13px; color: #888; border: 0 solid #7394c0; }
.slides li span { line-height: 16px; font-weight: 600; }
.slides .on { padding: 3px 3px 3px 12px; border-width: 1px; background: linear-gradient(#8facd2 50%, #a5c3e8 80%); color: #555; }
.thumb { width: 129px; height: 82px; border: 1px solid #999; }
.thumb.first { background: linear-gradient(transparent 52px, #e0b050 52px 53px, #0096d6 53px 79px, #fff 79px), radial-gradient(circle at 50% 60%, #fff, #f1f1f1 80px); }
.thumb.second { background: linear-gradient(#0096d6 15px, #f0c070 15px 16px, transparent 16px), radial-gradient(#fff, #f5f5f5); }
.thumb.third { background: linear-gradient(#1d8fc0 2px, #ddb 2px 3px, transparent 3px 76px, #0096d6 76px 79px, #fff 79px), radial-gradient(#fff, #f5f5f5); }

.stage { display: flex; flex: 1; flex-direction: column; min-width: 0; }
.canvas { display: grid; flex: 1; place-items: center; padding-right: 4px; }
.slide { display: grid; grid-template-rows: 1fr 78px; width: 366px; height: 231px; border: 1px solid #888; background: radial-gradient(circle at 50% 80%, #fff, #f2f2f2); }
.title { display: flex; align-items: flex-end; margin: 8px 19px 6px 16px; border: 1px dashed #bbb; color: #0c7a9f; font: 300 28px/37px "Noto Sans CJK SC", sans-serif; }
.lower { padding: 5px 19px 0 16px; border-top: 1px solid #c8963c; background: #0096d6; }
.text { height: 49px; border: 1px dashed #a8cfe4; color: #def1fa; font: 700 12px/18px "Noto Sans CJK SC", sans-serif; }
.hscroll { display: flex; justify-content: center; flex: none; height: 12px; background: #161616; }
.hscroll i { width: 35%; background: #5a5a5a; }

.sidebar { display: flex; flex: none; border: solid #5c5c5c; border-width: 2px 0; padding-left: 3px; }
.sidebar .tabs { width: 40px; border-top: 0; }
.deck { width: 325px; margin: 2px 0 3px; border: 1px solid #111; }
.deckhead { display: flex; align-items: center; height: 26px; padding: 0 1px 0 4px; }
.deckhead h2 { flex: 1; }
.deckhead button { align-self: flex-end; }
.pink { width: 2px; height: 14px; margin-right: 7px; background: repeating-linear-gradient(#ff00e0 0 2px, transparent 2px 4px); }
h3 { display: flex; align-items: center; height: 27px; padding-left: 6px; background: linear-gradient(#0c0c0c, #1e1e1e); }
h3::before { content: ""; width: 9px; height: 1px; margin-right: 6px; background: #fff; }
.opts { align-self: flex-end; margin: 0 4px 2px auto; }
.opts svg { width: 12px; height: 11px; }
.form { display: grid; grid-template-columns: 91px 204px; gap: 6px 8px; padding: 6px 0; align-items: center; }
.form > label { text-align: right; }
.form select {
  appearance: none;
  height: 36px;
  padding: 0 14px;
  border: 0;
  border-radius: 3px;
  background:
    linear-gradient(to bottom right, #e6e6e6 50%, transparent 50%) 183px 16px / 5px 5px no-repeat,
    linear-gradient(to bottom left, #e6e6e6 50%, transparent 50%) 178px 16px / 5px 5px no-repeat,
    #2d2d2d;
}
.btn, .checks { grid-column: 2; }
.btn { display: flex; align-items: center; justify-content: center; height: 32px; border: 1px solid #333; border-radius: 2px; background: #101010; }
.btn svg { width: 18px; height: 18px; margin-right: 5px; color: #aaa; }
.checks { display: grid; gap: 6px; padding: 0 2px; }
.checks label { display: flex; align-items: center; gap: 6px; height: 20px; }
.checks input { display: grid; place-items: center; appearance: none; width: 16px; height: 16px; border-radius: 1px; background: #4a86cf; }
.checks input:checked::before { content: ""; width: 5px; height: 9px; margin-bottom: 3px; border: solid #fff; border-width: 0 2px 2px 0; transform: rotate(45deg); }
.layouts { display: grid; grid-template-columns: repeat(4, 76px); gap: 4px; padding: 2px 0 2px 3px; background: #080808; }
.layouts button { display: grid; place-items: center; height: 62px; background: #1e1e1e; }
.layouts svg { width: 60px; height: 46px; }
.b { fill: #1fb0fb; }
.s { fill: url(#g-slate); }

.status { display: flex; flex: none; align-items: center; height: 24px; padding-top: 1px; border-top: 1px solid #5c5c5c; font-size: 12px; font-weight: 600; white-space: nowrap; }
.status > span { display: flex; flex: none; align-items: center; height: 18px; padding-left: 9px; border-right: 1px solid #eee; }
.status > .c95, .status > .c78 { padding-left: 11px; }
.status > .grow { flex: 1; }
.status > .mid { justify-content: center; padding: 0; }
.status > .last { border: 0; }
.c95 { width: 95px; } .c108 { width: 108px; } .c114 { width: 114px; } .c69 { width: 69px; } .c30 { width: 30px; }
.c48 { width: 48px; } .c77 { width: 77px; } .c55 { width: 54px; } .c78 { width: 78px; } .c65 { width: 65px; }
.c214 { width: 214px; } .c23 { width: 23px; } .c47 { width: 46px; }
.st { width: 16px; height: 16px; }
.pos b { margin: 0 6px 0 4px; font-weight: 600; }
.views { gap: 6px; }
.views svg { height: 12px; }
.views svg:nth-child(1) { width: 8px; }
.views svg:nth-child(2) { width: 18px; }
.views svg:nth-child(3) { width: 16px; }
.status > .zoom { width: 144px; gap: 6px; padding: 0 7px 0 9px; }
.zoom button { width: 10px; color: #999; font-size: 16px; line-height: 18px; }
.zoom input { appearance: none; flex: 1; min-width: 0; height: 18px; }
.zoom .zw { background: linear-gradient(#fff, #fff) 0 8px / 100% 2px no-repeat, linear-gradient(#fff, #fff) 34% 6px / 2px 6px no-repeat; }
.zoom .zi { background: linear-gradient(#fff, #fff) 0 8px / 100% 2px no-repeat, linear-gradient(#fff, #fff) 49% 6px / 2px 6px no-repeat; }
.zoom input::-webkit-slider-thumb { appearance: none; width: 8px; height: 8px; border: 1px solid #bbb; border-radius: 50%; background: #ddd; box-shadow: inset 0 0 0 1px #222; }

.panel { display: flex; flex: none; align-items: stretch; height: 34px; background: #000; }
.menu { width: 36px; padding-left: 6px; }
.menu svg { width: 20px; height: 20px; }
.tasks { display: flex; }
.tasks > button, .slot, .active { position: relative; display: grid; place-items: center; width: 39px; height: 34px; }
.tasks > button svg, .active svg { width: 20px; height: 20px; }
.run::after { content: ""; position: absolute; bottom: 0; left: 50%; width: 4px; height: 3px; margin-left: -2px; border-radius: 2px 2px 0 0; background: #a8c8f0; }
.active { background: #1e1e1e; box-shadow: inset 0 -3px #5294e2; }
.popup { position: absolute; z-index: 2; bottom: 46px; left: 50%; width: 256px; margin-left: -128px; border-radius: 4px; background: #080808; color: #ccc; box-shadow: 0 0 4px #0006; }
.popup::after { content: ""; position: absolute; top: 100%; left: 50%; margin-left: -10px; border: 10px solid transparent; border-top-color: #080808; border-bottom: 0; }
.popup .head { display: block; width: 100%; height: 39px; padding: 0 0 2px 13px; border-radius: 4px 4px 0 0; background: #262626; color: #ddd; text-align: left; }
.row { display: flex; align-items: center; height: 37px; padding: 0 0 2px 13px; }
.name { flex: 1; text-align: left; }
.ic { display: grid; place-items: center; width: 37px; height: 35px; color: #eee; }
.ic svg { width: 16px; height: 16px; }
.acts { display: grid; grid-template-columns: 1fr 1fr 1fr; height: 36px; color: #eee; }
.acts button { display: grid; place-items: center; }
.acts svg { width: 16px; height: 16px; }
.acts .dim { color: #555; }
.cursor { position: absolute; top: 8px; right: 25px; width: 14px; height: 22px; }
.tray { display: flex; align-items: center; gap: 3px; margin-left: auto; }
.tray svg { width: 20px; height: 20px; }
.tray svg:nth-child(-n+3) { width: 22px; margin-right: 2px; }
.tray svg:nth-child(3) { height: 18px; }
.tray time { padding: 0 7px 0 5px; font-weight: 600; }
```
